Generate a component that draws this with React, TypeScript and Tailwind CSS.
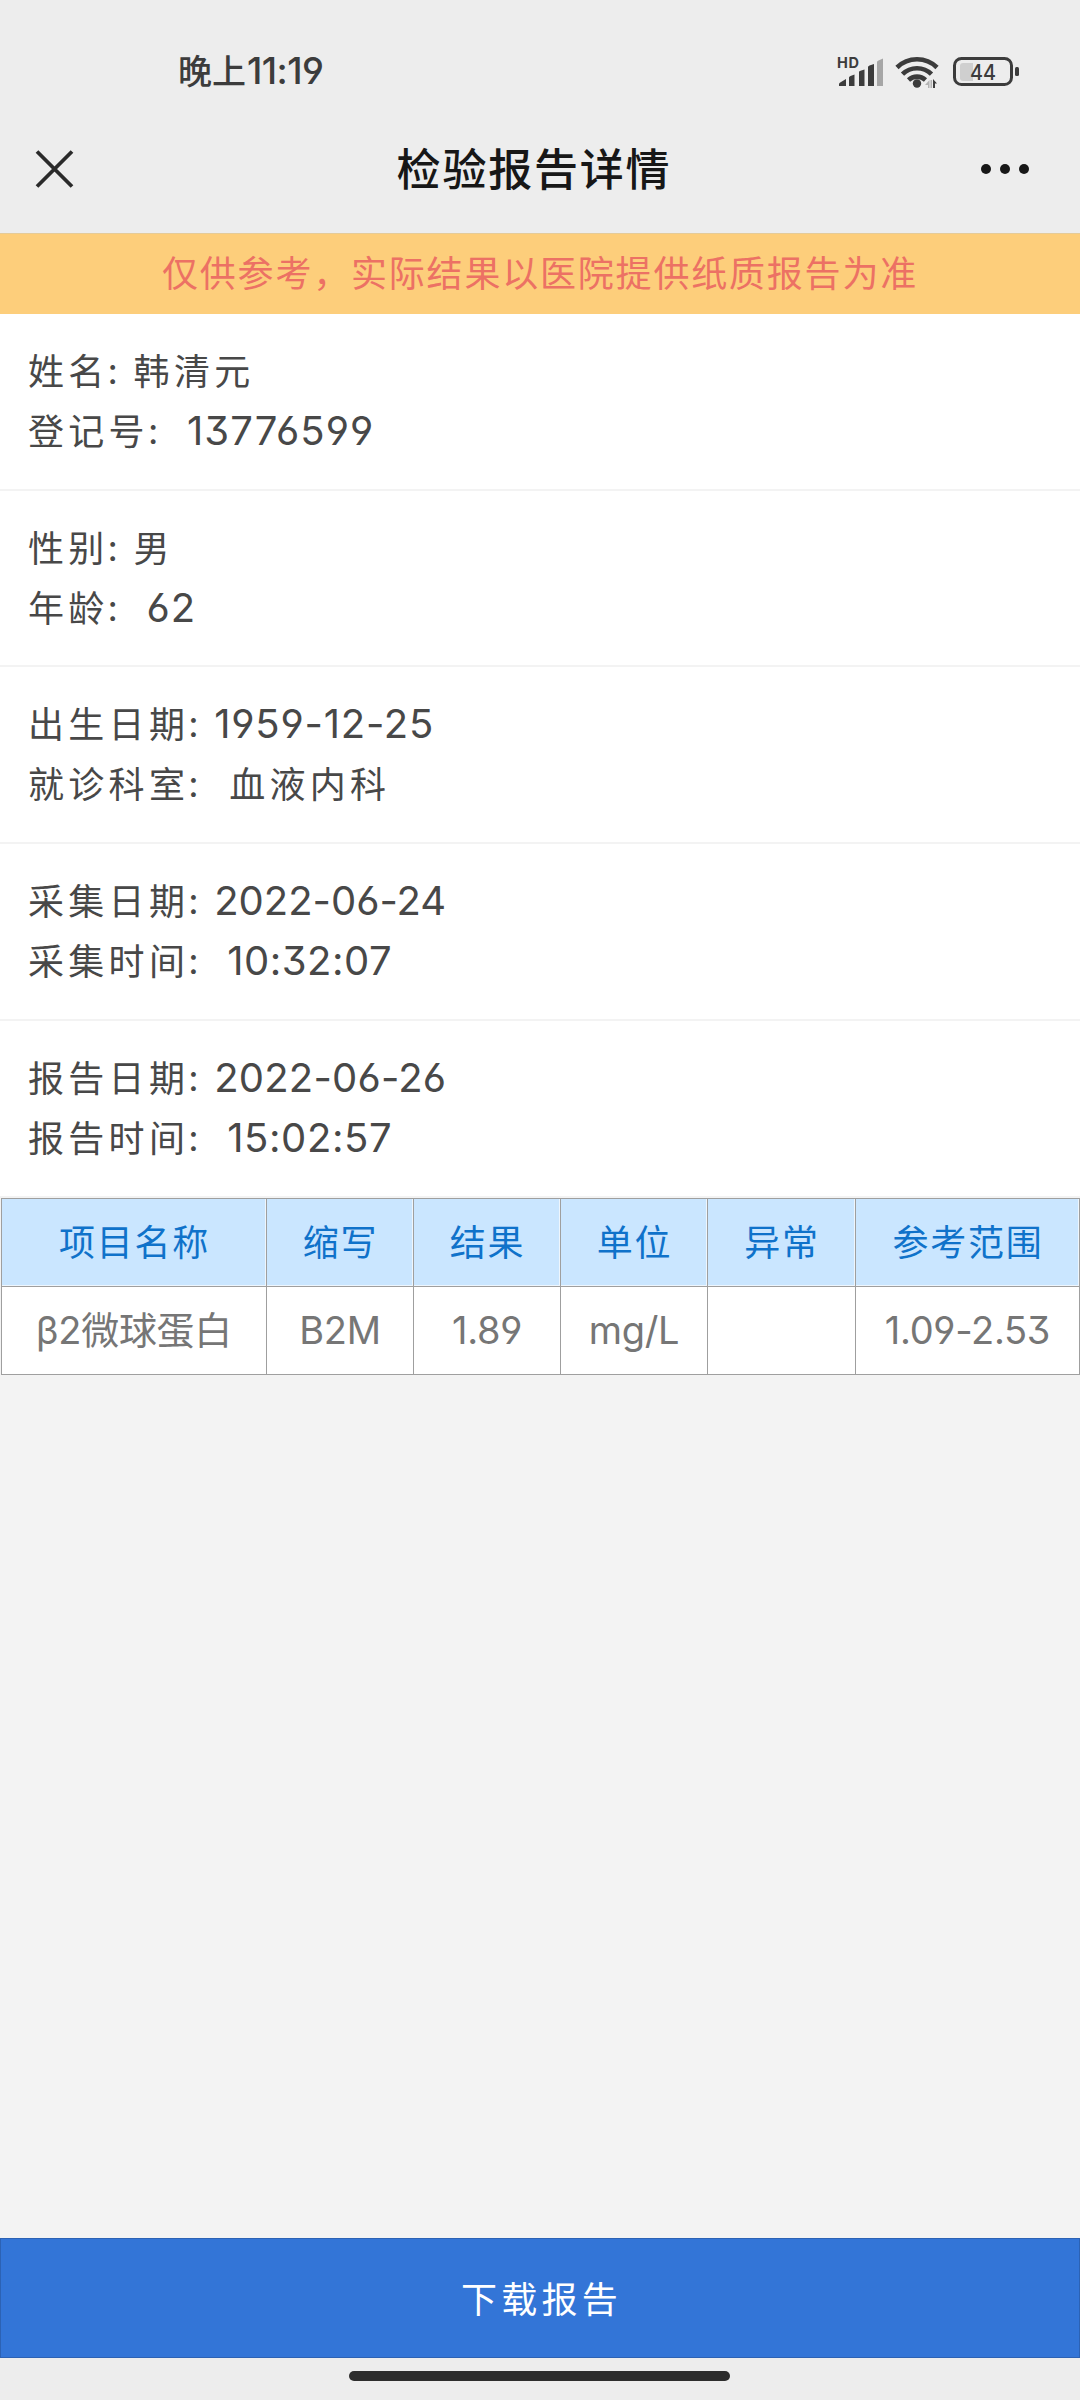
import clsx from 'clsx';

interface Field {
  label: string;
  value: string;
  // letter spacing of numeric values
  tracking?: string;
}

const groups: { height: string; rows: [Field, Field] }[] = [
  {
    height: 'h-[177px]',
    rows: [
      { label: '姓名', value: '韩清元' },
      { label: '登记号', value: '13776599', tracking: 'tracking-[1.1px]' },
    ],
  },
  {
    height: 'h-[176px]',
    rows: [
      { label: '性别', value: '男' },
      { label: '年龄', value: '62', tracking: 'tracking-[0.9px]' },
    ],
  },
  {
    height: 'h-[177px]',
    rows: [
      { label: '出生日期', value: '1959-12-25', tracking: 'tracking-[0.8px]' },
      { label: '就诊科室', value: '血液内科' },
    ],
  },
  {
    height: 'h-[177px]',
    rows: [
      { label: '采集日期', value: '2022-06-24', tracking: 'tracking-[0px]' },
      { label: '采集时间', value: '10:32:07', tracking: 'tracking-[0.5px]' },
    ],
  },
  {
    height: 'h-[177px]',
    rows: [
      { label: '报告日期', value: '2022-06-26', tracking: 'tracking-[0.2px]' },
      { label: '报告时间', value: '15:02:57', tracking: 'tracking-[0.6px]' },
    ],
  },
];

const headers = ['项目名称', '缩写', '结果', '单位', '异常', '参考范围'];
const values = ['β2微球蛋白', 'B2M', '1.89', 'mg/L', '', '1.09-2.53'];

const latinFont = "font-['Inter','Noto_Sans_CJK_SC',sans-serif] [font-feature-settings:'cv03','cv04','cv09','calt'_0]";

function StatusBar() {
  return (
    <div className="h-[104px] pt-[38px] pl-[178px] pr-[60px] flex justify-between text-[#3c3c3c]">
      <div className="h-[64px] flex items-center leading-none font-medium">
        <span className="text-[34px]">晚上</span>
        <span className={clsx(latinFont, 'text-[37px] ml-[1px] -tracking-[0.6px]')}>11:19</span>
      </div>
      <div className="flex h-[64px] items-start pt-[16px]">
        <svg width="48" height="36" viewBox="0 0 48 36" fill="#3c3c3c">
          <text x="0" y="14" fontSize="14.5" fontWeight="700" fontFamily="Inter, sans-serif" textLength="22">HD</text>
          <path d="M2 30v2h7v-7l-5 3q-2 1-2 2zM12 23.5v8.500h5.500v-11.500l-4 1.500q-1.500.5-1.500 1.500zM22 18v14h5.500v-16.500l-4 1.200q-1.500.4-1.500 1.300zM31 13v19h6v-22l-4.500 1.500q-1.500.5-1.500 1.500z" />
          <path d="M40 8v24h6v-27.500l-4.500 2q-1.500.6-1.500 1.500z" fill="#a6a6a6" />
        </svg>
        <svg className="ml-[10px]" width="48" height="36" viewBox="0 0 48 36" fill="none" stroke="#3c3c3c" strokeWidth="4.600">
          <path d="M2 13.500a28.500 28.500 0 0 1 40 0" />
          <path d="M7.500 20.200a20.500 20.500 0 0 1 29 0" />
          <path d="M13.500 26a12.500 12.500 0 0 1 17 0" />
          <circle cx="22" cy="29.500" r="4.200" fill="#3c3c3c" stroke="none" />
          <path d="M34.500 26v8h-1.500v-3h-3zM35.500 26h1.500v8h-1.500z" fill="#b3b3b3" stroke="none" />
          <path d="M38 34v-9l4 4.500h-2v4.500z" fill="#3c3c3c" stroke="none" />
        </svg>
        <svg className="ml-[9px]" width="68" height="36" viewBox="0 0 68 36">
          <rect x="2.500" y="4.500" width="57" height="26" rx="7" fill="none" stroke="#3c3c3c" strokeWidth="3" />
          <path d="M11 9h10v18h-10q-3 0-3-3v-12q0-3 3-3z" fill="#cfcfcf" />
          <rect x="63" y="13" width="4" height="9" rx="1.500" fill="#3c3c3c" />
          <text x="18" y="25.500" fontSize="22" fontWeight="500" fontFamily="Inter, sans-serif" textLength="26" lengthAdjust="spacingAndGlyphs" fill="#3c3c3c">44</text>
        </svg>
      </div>
    </div>
  );
}

function TitleBar() {
  return (
    <div className="h-[129px] px-[35px] flex items-center justify-between">
      <svg width="40" height="40" viewBox="0 0 40 40" stroke="#2a2a2a" strokeWidth="3.800">
        <path d="M2 2.500L37 37.500M37 2.500L2 37.500" />
      </svg>
      <h1 className="text-[44px] leading-none font-medium tracking-[1.8px] text-[#171717] ml-[12px] pb-[4px]">
        检验报告详情
      </h1>
      <div className="flex gap-[9px] mr-[16px]">
        <i className="size-[10px] rounded-full bg-[#171717]" />
        <i className="size-[10px] rounded-full bg-[#171717]" />
        <i className="size-[10px] rounded-full bg-[#171717]" />
      </div>
    </div>
  );
}

function FieldRow({ field, second }: { field: Field; second: boolean }) {
  return (
    <div className="h-[60px] flex items-center text-[36px] leading-[60px] tracking-[4.3px]">
      <span className="pb-[3px]">{field.label}</span>
      <span className={clsx(latinFont, '-ml-px pt-px', second ? 'w-[39px]' : 'w-[26px]')}>:</span>
      {field.tracking ? (
        <span className={clsx(latinFont, field.tracking, 'text-[40px] pt-[2px]')}>{field.value}</span>
      ) : (
        <span className={clsx('pb-[3px]', second && 'pl-[2px]')}>{field.value}</span>
      )}
    </div>
  );
}

export default function App() {
  return (
    <div className="w-[1080px] h-[2400px] flex flex-col bg-[#f3f3f3] font-['Noto_Sans_CJK_SC',sans-serif]">
      <header className="bg-[#ededed]">
        <StatusBar />
        <TitleBar />
      </header>

      <div className="h-[81px] pb-[6px] border-t border-[#e5cb98] bg-[#fdce7b] flex items-center justify-center text-[36px] leading-none tracking-[1.8px] text-[#ec7164]">
        仅供参考，实际结果以医院提供纸质报告为准
      </div>

      {groups.map((group, i) => (
        <section
          key={i}
          className={clsx(group.height, 'bg-white border-b-2 border-[#f3f3f3] pt-[26px] pl-[28px] text-[#484848]')}
        >
          <FieldRow field={group.rows[0]} second={false} />
          <FieldRow field={group.rows[1]} second={true} />
        </section>
      ))}

      <div className="ml-px grid grid-cols-[265px_147px_147px_147px_148px_225px] border-b border-[#9f9f9f]">
        {headers.map((h) => (
          <div key={h} className="h-[88px] border-l border-t border-[#9f9f9f] nth-[6n]:border-r">
            <div className="h-full pb-[5px] pl-[2px] flex items-center justify-center bg-[#cae6ff] border-r border-b border-[#eef6fd] text-[36px] leading-none tracking-[1.7px] text-[#0f72ca]">
              {h}
            </div>
          </div>
        ))}
        {values.map((v, i) => (
          <div
            key={i}
            className={clsx(
              latinFont,
              'h-[88px] pb-[2px] border-l border-t border-[#9f9f9f] bg-white nth-[6n]:border-r flex items-center justify-center text-[38px] leading-none -tracking-[0.3px] text-[#767676]'
            )}
          >
            {v}
          </div>
        ))}
      </div>

      <footer className="mt-auto bg-[#ededed]">
        <button className="block w-full h-[120px] pb-[3px] pl-[3px] border border-[#2c62b4] bg-[#3375d7] text-center text-[36px] leading-none tracking-[4.3px] text-white">
          下载报告
        </button>
        <div className="h-[42px] pt-[13px]">
          <div className="ml-[349px] w-[381px] h-[10px] rounded-full bg-[#2d2d2d]" />
        </div>
      </footer>
    </div>
  );
}
